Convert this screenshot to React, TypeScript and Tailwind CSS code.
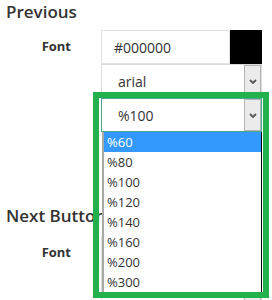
const sizes = ["%60", "%80", "%100", "%120", "%140", "%160", "%200", "%300"];

function Chevron() {
  return (
    <svg width="8" height="5" viewBox="0 0 8 5" fill="none">
      <path d="M1 1l3 3 3-3" stroke="#555" strokeWidth="1.8" />
    </svg>
  );
}

function Select({ value, focused }: { value: string; focused?: boolean }) {
  return (
    <div
      className={`flex h-[34px] w-[161px] border ${
        focused ? "border-[#49a98e]" : "border-[#dcdcdc]"
      }`}
    >
      <div className="flex-1 flex items-center pl-4 text-[14px]">{value}</div>
      <div className="w-[17px] border border-[#b4b4b4] bg-[#ebebeb] flex items-center justify-center">
        <Chevron />
      </div>
    </div>
  );
}

function ColorInput({ value }: { value: string }) {
  return (
    <div className="flex h-[34px] w-[161px]">
      <div className="w-[129px] border border-[#e2e2e2] flex items-center pl-3 text-[14px]">{value}</div>
      <div className="w-[32px] bg-black" />
    </div>
  );
}

export default function App() {
  return (
    <div className="relative w-[272px] h-[300px] overflow-hidden bg-white font-['Open_Sans',sans-serif] text-[#333]">
      {/* ── Previous ── */}
      <h2 className="pl-[6px] text-[17px] leading-[24px] font-semibold">Previous</h2>
      <div className="flex mt-[6px]">
        <div className="w-[71px] h-[34px] flex items-center justify-end text-[13px] font-bold">Font</div>
        <div className="ml-[30px] flex flex-col">
          <ColorInput value="#000000" />
          <Select value="arial" />
          <Select value="%100" focused />
        </div>
      </div>

      {/* ── Next Button (controls sit under the open list) ── */}
      <h2 className="mt-[72px] pl-[6px] text-[17px] leading-[24px] font-semibold">Next Button</h2>
      <div className="flex mt-[8px]">
        <div className="w-[71px] h-[34px] flex items-center justify-end text-[13px] font-bold">Font</div>
        <div className="ml-[30px] flex flex-col">
          <ColorInput value="" />
          <Select value="" />
        </div>
      </div>

      {/* open dropdown list */}
      <ul className="absolute left-[102px] top-[132px] w-[160px] bg-white border-l-2 border-l-[#a8a8a8] border-r border-b border-r-black border-b-black text-[13px]">
        {sizes.map((s, i) => (
          <li
            key={s}
            className={`h-[20px] leading-[20px] pl-[3px] ${i === 0 ? "bg-[#3399ff] text-white" : ""}`}
          >
            {s}
          </li>
        ))}
      </ul>

      {/* highlight frame */}
      <div className="absolute left-[93px] top-[92px] w-[176px] h-[206px] border-[6px] border-[#22b14c] pointer-events-none" />
    </div>
  );
}
